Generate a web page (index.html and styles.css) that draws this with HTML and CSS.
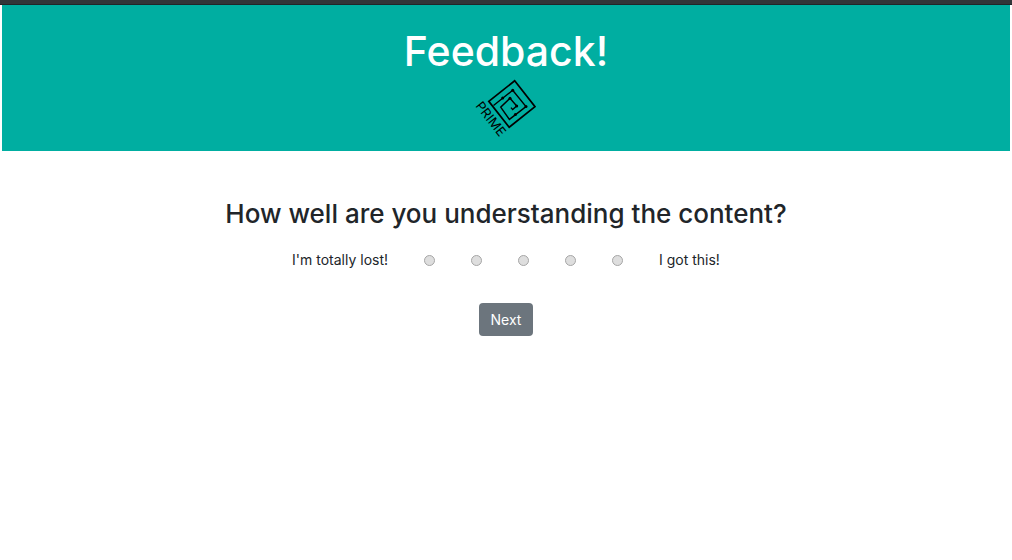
FILE: index.html
```html
<!DOCTYPE html>
<html lang="en">
<head>
<meta charset="utf-8">
<meta name="viewport" content="width=device-width, initial-scale=1">
<title>Feedback!</title>
<link rel="stylesheet" href="styles.css">
</head>
<body>
<div class="top-strip"></div>
<header class="banner">
  <h1 class="banner-title">Feedback!</h1>
  <svg class="logo" viewBox="0 0 60 60" role="img" aria-label="Prime">
    <g fill="none" stroke="#000">
      <path stroke-width="1.7" d="M38.7 .8 59 26.6 33.2 47.2 12.8 21.4Z"/>
      <path stroke-width="1.4" d="M17.5 25.5 36.7 10.3 50 26.6 33.4 39.4 24.7 27.2 34 18.3 40.7 26 36.7 29.6 35 27.6"/>
    </g>
    <g>
      <circle cx="26.7" cy="18" r="1.5"/><circle cx="36.7" cy="10.3" r="1.5"/>
      <circle cx="50" cy="26.6" r="1.5"/><circle cx="39.4" cy="34.6" r="1.5"/>
      <circle cx="34" cy="18.3" r="1.5"/><circle cx="40.7" cy="26" r="1.5"/>
    </g>
    <text class="logo-text" transform="translate(-1 26) rotate(52)">PRIME</text>
  </svg>
</header>
<main class="content">
  <h2 class="question" id="question">How well are you understanding the content?</h2>
  <form class="survey">
    <div class="scale" role="radiogroup" aria-labelledby="question">
      <span class="scale-end">I'm totally lost!</span>
      <div class="options">
        <input class="option" type="radio" name="score" value="1" aria-label="1">
        <input class="option" type="radio" name="score" value="2" aria-label="2">
        <input class="option" type="radio" name="score" value="3" aria-label="3">
        <input class="option" type="radio" name="score" value="4" aria-label="4">
        <input class="option" type="radio" name="score" value="5" aria-label="5">
      </div>
      <span class="scale-end">I got this!</span>
    </div>
    <button class="next" type="button">Next</button>
  </form>
</main>
</body>
</html>
```
FILE: styles.css
```css
* { box-sizing: border-box; }
body {
  margin: 0;
  background: #fff;
  color: #212529;
  font-family: Inter, "Liberation Sans", sans-serif;
  font-size: 14px;
  line-height: 20px;
}
.top-strip {
  height: 5px;
  background: #323639;
  border-bottom: 1px solid #222629;
}
.banner {
  display: flex;
  flex-direction: column;
  align-items: center;
  margin: 0 2px;
  padding: 20px 0 11px;
  background: #00aea1;
}
.banner-title {
  margin: 0 0 3px;
  color: #fff;
  font-size: 41px;
  font-weight: 500;
  line-height: 52px;
}
.logo {
  display: block;
  width: 60px;
  height: 60px;
  overflow: visible;
}
.logo-text {
  font-size: 13px;
  font-weight: 400;
}
.content {
  padding: 46px 16px 0;
  text-align: center;
}
.question {
  margin: 0 0 19px;
  font-size: 26px;
  font-weight: 500;
  line-height: 34px;
}
.survey {
  display: flex;
  flex-direction: column;
  align-items: center;
  gap: 33px;
}
.scale {
  display: flex;
  align-items: center;
  gap: 36px;
}
.options {
  display: flex;
  gap: 36px;
}
.option {
  appearance: none;
  width: 11px;
  height: 11px;
  margin: 0;
  border: 1px solid #a6a6a6;
  border-radius: 50%;
  background: #dedede;
}
.option:checked { background: #6c757d; }
.next {
  padding: 6px 12px;
  border: 0;
  border-radius: 4px;
  background: #6c757d;
  color: #fff;
  font: inherit;
  line-height: 21px;
}
```
